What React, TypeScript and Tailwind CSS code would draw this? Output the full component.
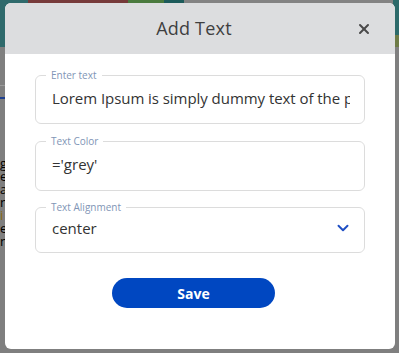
import { X, ChevronDown } from "lucide-react";

const font = { fontFamily: '"Open Sans", "Noto Sans", sans-serif' };

function Field({
  label,
  children,
  className = "",
}: {
  label: string;
  children: React.ReactNode;
  className?: string;
}) {
  return (
    <fieldset
      className={`min-w-0 rounded-[6px] border border-[#dcdcdc] pl-[16px] pr-[14px] ${className}`}
    >
      <legend className="ml-[-6px] px-[5px] text-[10px] leading-[12px] text-[#8195b6]">
        {label}
      </legend>
      {children}
    </fieldset>
  );
}

export default function App() {
  return (
    <div className="relative h-[353px] w-[399px] overflow-hidden bg-[#7f7f7f]" style={font}>
      {/* dimmed page behind the dialog */}
      <div className="flex h-[47px]">
        <div className="w-[28px] bg-[#2f6a6c]" />
        <div className="w-[100px] bg-[#763a3a]" />
        <div className="w-[36px] bg-[#4a7a3e]" />
        <div className="w-[20px] bg-[#1d5b5b]" />
        <div className="flex-1 bg-[#838383]" />
        <div className="flex w-[6px] flex-col">
          <div className="h-[35px] bg-[#2c6a6a]" />
          <div className="flex-1 bg-[#6d7b46]" />
        </div>
      </div>
      <div className="mt-[38px] h-px w-[6px] bg-[#9a9a9a]" />
      <div className="mt-[11px] h-[2px] w-[6px] bg-[#1d3f8f]" />
      <div className="mt-[58px] w-[6px] overflow-hidden text-[13px] leading-[13px] text-black">
        <div>g</div>
        <div>e</div>
        <div>a</div>
        <div>n</div>
        <div className="text-[#8a6a10]">i</div>
        <div>e</div>
        <div>n</div>
      </div>

      {/* dialog */}
      <div className="absolute left-[5px] top-[3px] flex h-[346px] w-[390px] flex-col overflow-hidden rounded-[6px] bg-white">
        <div className="relative flex h-[51px] shrink-0 items-center justify-center bg-[#dcdddf] pr-[12px]">
          <span className="text-[18px] tracking-[0.2px] text-[#3f3f3f]">Add Text</span>
          <X className="absolute right-[23px] top-[18px] h-[16px] w-[16px] text-[#4a4a4a]" strokeWidth={3} />
        </div>

        <div className="flex flex-col px-[30px] pt-[15px]">
          <Field label="Enter text" className="h-[55px]">
            <div className="mt-[7px] w-[298px] overflow-hidden whitespace-nowrap text-[15px] leading-[20px] tracking-[-0.05px] text-[#333]">
              Lorem Ipsum is simply dummy text of the printing and typesetting industry.
            </div>
          </Field>
          <Field label="Text Color" className="mt-[11px] h-[56px]">
            <div className="mt-[7px] text-[15px] leading-[20px] text-[#333]">='grey'</div>
          </Field>
          <Field label="Text Alignment" className="mt-[10px] h-[52px]">
            <div className="mt-[5px] flex w-[298px] items-center justify-between">
              <span className="text-[15px] leading-[20px] text-[#333]">center</span>
              <ChevronDown className="mr-[-2px] h-[18px] w-[18px] text-[#1f4fc4]" strokeWidth={2.6} />
            </div>
          </Field>
        </div>

        <div className="mt-[25px] flex pl-[107px]">
          <button className="h-[30px] w-[163px] rounded-full bg-[#0047c1] text-[14px] font-bold text-white">
            Save
          </button>
        </div>
      </div>
    </div>
  );
}
